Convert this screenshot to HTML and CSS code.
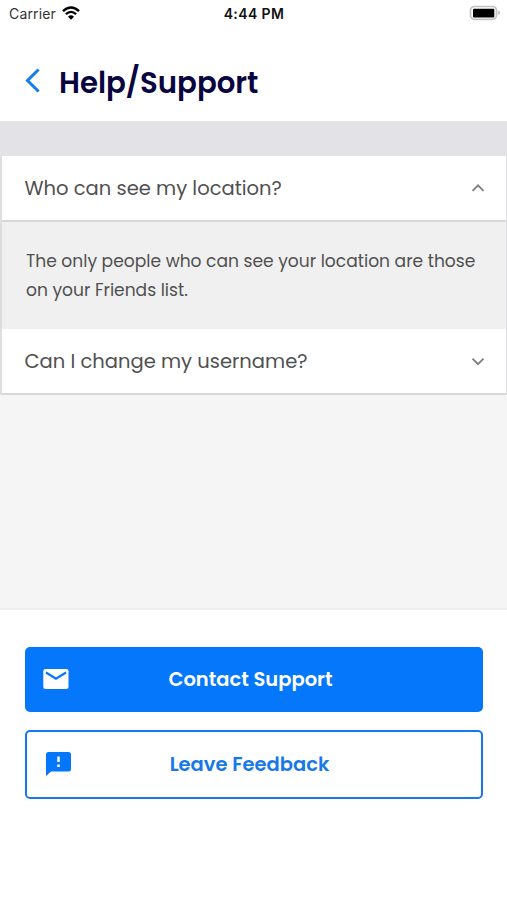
FILE: index.html
```html
<!DOCTYPE html>
<html lang="en">
<head>
<meta charset="utf-8">
<meta name="viewport" content="width=device-width, initial-scale=1">
<title>Help/Support</title>
<link rel="stylesheet" href="styles.css">
</head>
<body>
<div class="screen">
  <div class="status">
    <div class="carrier"><span>Carrier</span>
      <svg class="wifi" viewBox="0 0 18 14" width="18" height="14"><path d="M1 5.200Q9-2.200 17 5.200" fill="none" stroke="#000" stroke-width="2.500"/><path d="M3.900 8.200Q9 3.500 14.100 8.200" fill="none" stroke="#000" stroke-width="2.300"/><path d="M6 10.700Q9 7.900 12 10.700L9 13.700Z" fill="#000"/></svg>
    </div>
    <time class="clock">4:44 PM</time>
    <svg class="battery" viewBox="0 0 32 16" width="32" height="16"><rect x="1.500" y="1.500" width="26" height="12.800" rx="4" fill="#fff" stroke="#c2c2c2" stroke-width="1.700"/><rect x="4" y="3.700" width="21.300" height="8.800" rx="1" fill="#000"/><path d="M29.200 5.500Q31 6.300 31 7.800T29.200 10.100Z" fill="#b5b5b5"/></svg>
  </div>
  <header class="header">
    <svg class="back" viewBox="0 0 16 26" width="16" height="26"><path d="M13.600 2.500L2.500 13.500L13.600 24.500" fill="none" stroke="#147dee" stroke-width="3"/></svg>
    <h1 class="title">Help/Support</h1>
  </header>
  <main class="content">
    <section class="faq">
      <div class="question"><span>Who can see my location?</span>
        <svg class="chevron" viewBox="0 0 14 10" width="14" height="10"><path d="M1.500 7.800L7 2.300L12.500 7.800" fill="none" stroke="#808080" stroke-width="1.900"/></svg>
      </div>
      <div class="answer"><p class="line">The only people who can see your location are those</p><p class="line">on your Friends list.</p></div>
      <div class="question"><span>Can I change my username?</span>
        <svg class="chevron" viewBox="0 0 14 10" width="14" height="10"><path d="M1.500 2.700L7 8.200L12.500 2.700" fill="none" stroke="#808080" stroke-width="1.900"/></svg>
      </div>
    </section>
  </main>
  <footer class="actions">
    <button class="btn primary">
      <svg class="icon" viewBox="0 0 26 20" width="26" height="20"><rect x="0.300" width="25.200" height="20" rx="2.200" fill="#fff"/><path d="M3 3.500L13 9.800L23 3.500" fill="none" stroke="#0577fb" stroke-width="2.200"/></svg>
      <span class="label">Contact Support</span>
    </button>
    <button class="btn outline">
      <svg class="icon" viewBox="0 0 25 24" width="25" height="24"><path d="M2.500 0H22.500Q25 0 25 2.500V17Q25 19.500 22.500 19.500H5L0 24V2.500Q0 0 2.500 0Z" fill="#0577fb"/><path d="M12.500 4.500V10M12.500 12.400V15" stroke="#fff" stroke-width="2.500"/></svg>
      <span class="label">Leave Feedback</span>
    </button>
  </footer>
</div>
</body>
</html>
```
FILE: styles.css
```css
* { box-sizing: border-box; }
body { margin: 0; background: #fff; font-family: Poppins, Inter, sans-serif; }
.screen { width: 507px; height: 900px; display: flex; flex-direction: column; overflow: hidden; }
.status { height: 26px; padding: 0 6px 0 9px; display: grid; grid-template-columns: 1fr auto 1fr; align-items: center; font-family: Inter, sans-serif; color: #111; }
.carrier { display: flex; align-items: center; gap: 6px; font-size: 14px; letter-spacing: 0.15px; color: #333; }
.clock { font-size: 14px; font-weight: 600; letter-spacing: 0.4px; padding-right: 2px; }
.battery { justify-self: end; }
.header { height: 96px; padding: 16px 25px 0; display: flex; align-items: center; gap: 18px; border-bottom: 1px solid #e5e5e8; }
.back { margin-bottom: 3px; }
.title { margin: 0; font-size: 29.2px; line-height: 40px; font-weight: 600; color: #08053f; padding-top: 2px; }
.content { height: 488px; padding-top: 34px; background: linear-gradient(#e3e2e7 34px, #f5f5f5 34px); border-bottom: 2px solid #eee; }
.faq { border: solid #dedee0; border-width: 0 1px 0 2px; }
.question { height: 66px; padding: 0 21px 0 22.5px; display: flex; align-items: center; justify-content: space-between; background: #fff; border-bottom: 2px solid #d8d8d8; font-size: 19.53px; color: #505050; }
.answer { height: 107px; padding: 25px 24px 0; background: #f0f0f0; font-size: 17.1px; line-height: 29px; color: #505050; }
.line { margin: 0; white-space: nowrap; }
.actions { padding: 37px 25px 0; display: flex; flex-direction: column; gap: 18px; }
.btn { width: 458px; border: 0; border-radius: 5px; padding: 0 17px 0 18px; display: grid; grid-template-columns: 26px 1fr 34px; align-items: center; font: 600 19.5px/28px Poppins, Inter, sans-serif; text-align: center; }
.primary { height: 65px; background: #0577fb; color: #fff; }
.primary .icon { margin-bottom: 1px; }
.outline { height: 69px; background: #fff; border: 2.5px solid #1778ed; padding: 0 20px 0 19px; color: #1778e8; }
.outline .icon { margin-bottom: 2px; }
.label { white-space: nowrap; }
```
